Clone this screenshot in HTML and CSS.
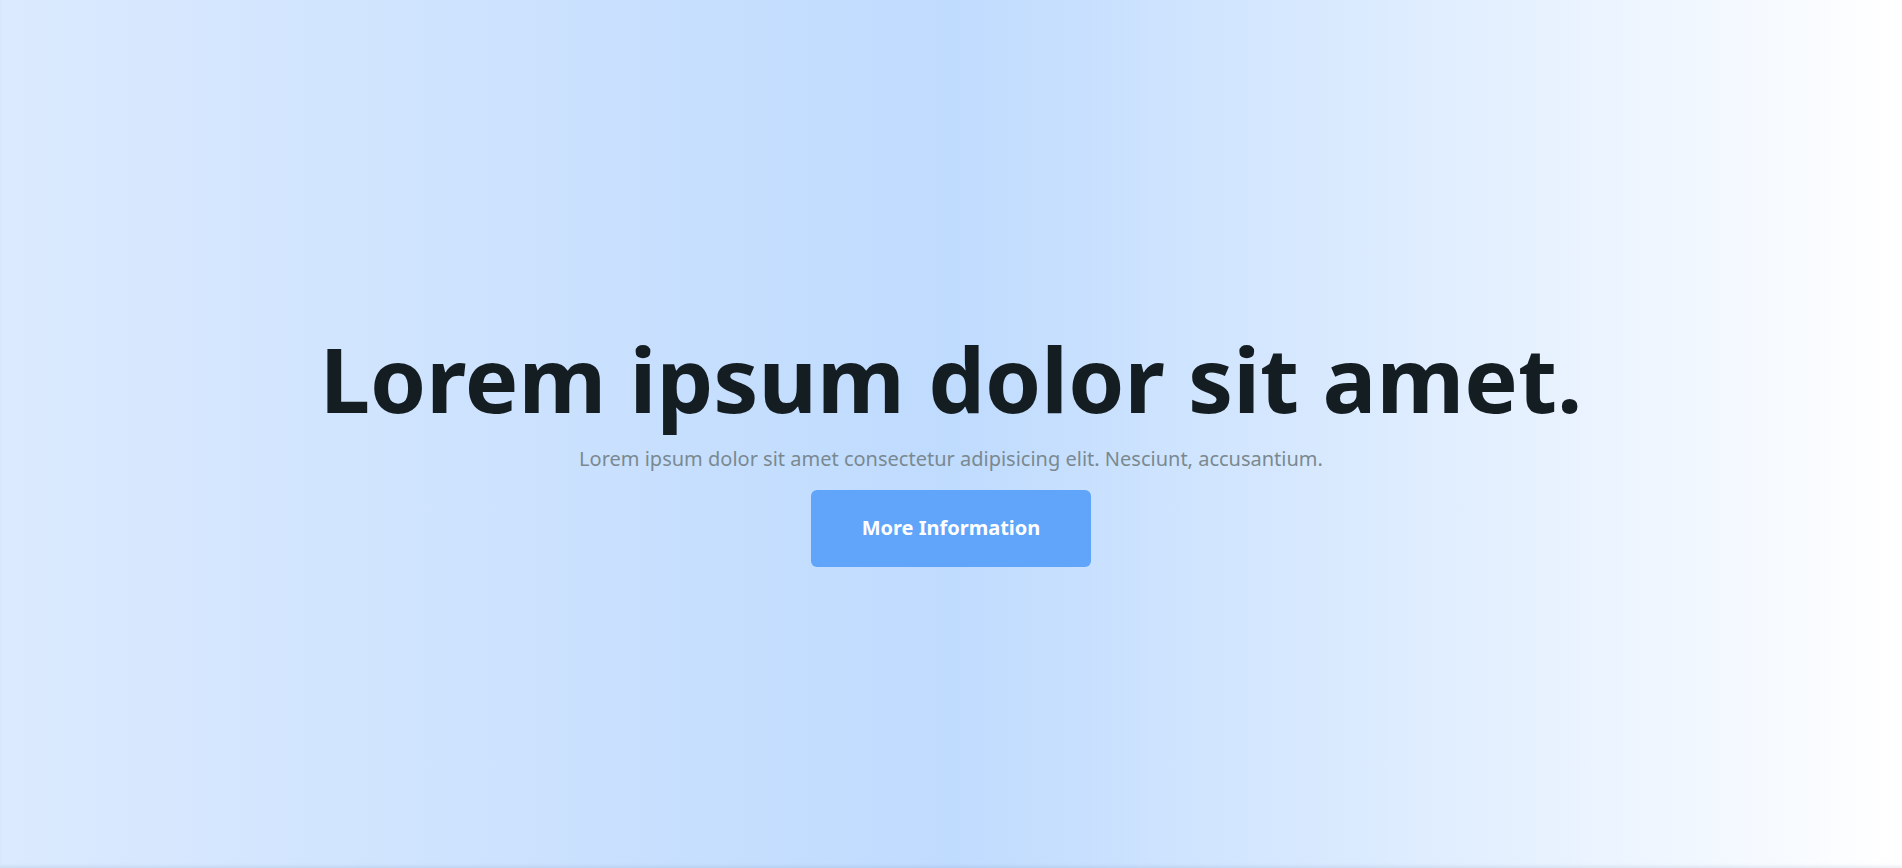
FILE: index.html
```html
<!DOCTYPE html>
<html lang="en">
<head>
<meta charset="utf-8">
<title>Hero</title>
<link rel="stylesheet" href="styles.css">
</head>
<body>
<section class="hero">
  <h1 class="hero-title">Lorem ipsum dolor sit amet.</h1>
  <p class="hero-text">Lorem ipsum dolor sit amet consectetur adipisicing elit. Nesciunt, accusantium.</p>
  <a class="hero-btn" href="#">More Information</a>
</section>
</body>
</html>
```
FILE: styles.css
```css
html, body {
  margin: 0;
  padding: 0;
}
body {
  font-family: "Noto Sans", "Open Sans", sans-serif;
}
.hero {
  height: 868px;
  box-sizing: border-box;
  display: flex;
  flex-direction: column;
  align-items: center;
  justify-content: center;
  padding-top: 32px;
  background: linear-gradient(to right, #dbeafe 0%, #bfdbfe 50%, #ffffff 100%);
  box-shadow: inset 0 -3px 3px -1px rgba(100, 120, 160, 0.12);
}
.hero-title {
  margin: 0;
  font-size: 90px;
  line-height: 1;
  font-weight: 700;
  color: #141d21;
}
.hero-text {
  margin: 22px 0 17px;
  font-size: 20px;
  line-height: 28px;
  color: #7a8990;
}
.hero-btn {
  display: block;
  width: 280px;
  box-sizing: border-box;
  padding: 24px 0 25px;
  text-align: center;
  background: #60a5fa;
  color: #ffffff;
  font-size: 20px;
  line-height: 28px;
  font-weight: 700;
  text-decoration: none;
  border-radius: 6px;
}
```
